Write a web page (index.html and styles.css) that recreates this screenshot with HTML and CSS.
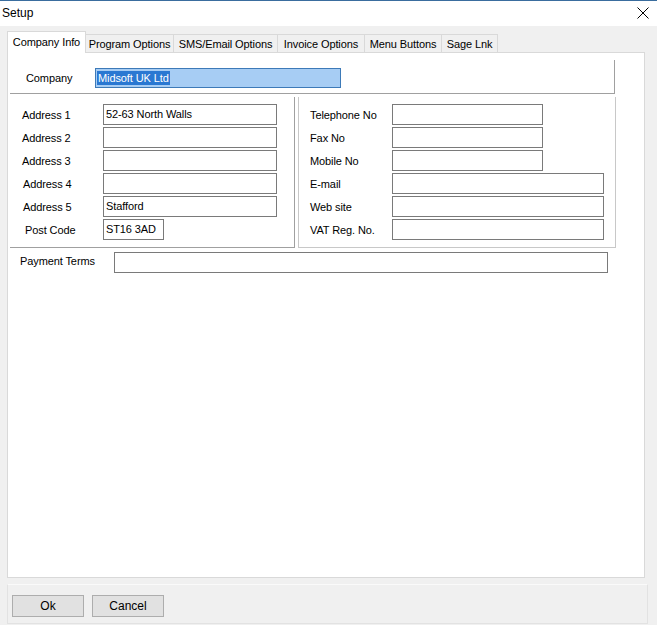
FILE: index.html
```html
<!DOCTYPE html>
<html>
<head>
<meta charset="utf-8">
<title>Setup</title>
<link rel="stylesheet" href="styles.css">
</head>
<body>
<div class="window">
  <div class="titlebar">
    <span class="title">Setup</span>
    <svg class="close" width="12" height="12" viewBox="0 0 12 12"><path d="M0.5 0.5 L11.5 11.5 M11.5 0.5 L0.5 11.5" stroke="#000" stroke-width="1" fill="none"/></svg>
  </div>
  <div class="client">
    <div class="tabs">
      <div class="tab sel t1">Company Info</div>
      <div class="tab t2">Program Options</div>
      <div class="tab t3">SMS/Email Options</div>
      <div class="tab t4">Invoice Options</div>
      <div class="tab t5">Menu Buttons</div>
      <div class="tab t6">Sage Lnk</div>
    </div>
    <div class="page">
      <div class="company">
        <span class="lbl-company">Company</span>
        <div class="field company-field"><span class="selected">Midsoft UK Ltd</span></div>
      </div>
      <div class="panels">
        <div class="panel left">
          <div class="row"><span class="lbl">Address 1</span><div class="field w-addr">52-63 North Walls</div></div>
          <div class="row"><span class="lbl">Address 2</span><div class="field w-addr"></div></div>
          <div class="row"><span class="lbl">Address 3</span><div class="field w-addr"></div></div>
          <div class="row"><span class="lbl shift1">Address 4</span><div class="field w-addr"></div></div>
          <div class="row"><span class="lbl shift1">Address 5</span><div class="field w-addr">Stafford</div></div>
          <div class="row"><span class="lbl shift3">Post Code</span><div class="field w-pc">ST16 3AD</div></div>
        </div>
        <div class="panel right">
          <div class="row"><span class="lbl">Telephone No</span><div class="field w-short"></div></div>
          <div class="row"><span class="lbl">Fax No</span><div class="field w-short"></div></div>
          <div class="row"><span class="lbl">Mobile No</span><div class="field w-short"></div></div>
          <div class="row"><span class="lbl">E-mail</span><div class="field w-long"></div></div>
          <div class="row"><span class="lbl">Web site</span><div class="field w-long"></div></div>
          <div class="row"><span class="lbl">VAT Reg. No.</span><div class="field w-long"></div></div>
        </div>
      </div>
      <div class="terms">
        <span class="lbl-terms">Payment Terms</span>
        <div class="field w-terms"></div>
      </div>
    </div>
    <div class="footer">
      <div class="btn">Ok</div>
      <div class="btn">Cancel</div>
    </div>
  </div>
</div>
</body>
</html>
```

FILE: styles.css
```css
html, body {
  margin: 0;
  padding: 0;
}
body {
  width: 657px;
  height: 625px;
  overflow: hidden;
  font-family: "Liberation Sans", Arial, sans-serif;
  font-size: 11px;
  letter-spacing: -0.1px;
  color: #000;
  background: #f0f0f0;
}
.window {
  width: 657px;
  height: 625px;
  border-top: 1px solid #3a6d9e;
  box-sizing: border-box;
  display: flex;
  flex-direction: column;
}
.titlebar {
  height: 25px;
  background: #fff;
  display: flex;
  align-items: center;
  justify-content: space-between;
  padding: 0 8px 0 2px;
  flex: none;
}
.title {
  font-size: 12px;
  letter-spacing: 0;
  margin-top: -1px;
}
.close {
  display: block;
  margin-top: -1px;
}
.client {
  flex: 1;
  background: #f0f0f0;
  display: flex;
  flex-direction: column;
}
.tabs {
  display: flex;
  align-items: flex-end;
  height: 21px;
  margin-top: 5px;
  padding-left: 7px;
}
.tab {
  height: 18px;
  box-sizing: border-box;
  border: 1px solid #d9d9d9;
  border-bottom: none;
  border-left: none;
  background: #f0f0f0;
  display: flex;
  align-items: center;
  justify-content: center;
  padding-top: 1px;
}
.tab.sel {
  background: #fff;
  border-left: 1px solid #d9d9d9;
  padding-top: 0;
  padding-bottom: 2px;
  position: relative;
  z-index: 1;
  margin-bottom: -1px;
  height: 22px;
}
.t1 { width: 79px; }
.t2 { width: 88px; }
.t3 { width: 104px; }
.t4 { width: 87px; }
.t5 { width: 77px; }
.t6 { width: 56px; }
.page {
  margin-left: 7px;
  width: 638px;
  height: 526px;
  box-sizing: border-box;
  background: #fff;
  border: 1px solid #d9d9d9;
  padding: 7px 0 0 2px;
}
.company {
  width: 605px;
  height: 34px;
  box-sizing: border-box;
  border-right: 1px solid #a0a0a0;
  border-bottom: 1px solid #a0a0a0;
  display: flex;
  align-items: flex-start;
  padding-top: 8px;
}
.lbl-company {
  width: 69px;
  padding-left: 16px;
  line-height: 20px;
  margin-top: 0;
}
.field {
  height: 21px;
  box-sizing: border-box;
  border: 1px solid #7a7a7a;
  background: #fff;
  padding-left: 2px;
  line-height: 19px;
  white-space: nowrap;
  overflow: hidden;
}
.company-field {
  width: 246px;
  height: 20px;
  line-height: 18px;
  background: #a7cdf4;
  border-color: #3d7ab8;
  padding-left: 1px;
}
.selected {
  background: #2a78d2;
  color: #fff;
  padding: 1px 1px;
}
.panels {
  display: flex;
  gap: 3px;
  margin-top: 3px;
}
.panel {
  height: 151px;
  box-sizing: border-box;
}
.panel.left {
  width: 285px;
  border-right: 1px solid #a0a0a0;
  border-bottom: 1px solid #a0a0a0;
  padding-top: 6px;
}
.panel.right {
  width: 318px;
  border: 1px solid #c8c8c8;
  border-top: none;
  padding-top: 6px;
}
.row {
  display: flex;
  align-items: center;
  height: 23px;
}
.panel.left .lbl {
  width: 81px;
  padding-left: 12px;
}
.panel.right .lbl {
  width: 82px;
  padding-left: 11px;
}
.panel.left .lbl.shift1 {
  width: 80px;
  padding-left: 13px;
}
.panel.left .lbl.shift3 {
  width: 78px;
  padding-left: 15px;
}
.w-addr { width: 174px; }
.w-pc { width: 61px; }
.w-short { width: 151px; }
.w-long { width: 212px; }
.terms {
  display: flex;
  align-items: center;
  margin-top: 4px;
  padding-left: 10px;
}
.lbl-terms {
  width: 94px;
  margin-top: -3px;
}
.w-terms { width: 494px; }
.footer {
  margin: 6px 0 0 7px;
  width: 641px;
  height: 40px;
  box-sizing: border-box;
  border: 1px solid #e2e2e2;
  border-top-color: #fafafa;
  display: flex;
  gap: 8px;
  padding: 10px 0 0 4px;
}
.btn {
  width: 72px;
  height: 22px;
  box-sizing: border-box;
  background: #e1e1e1;
  border: 1px solid #adadad;
  display: flex;
  align-items: center;
  justify-content: center;
  font-size: 12px;
  letter-spacing: 0;
}
```
